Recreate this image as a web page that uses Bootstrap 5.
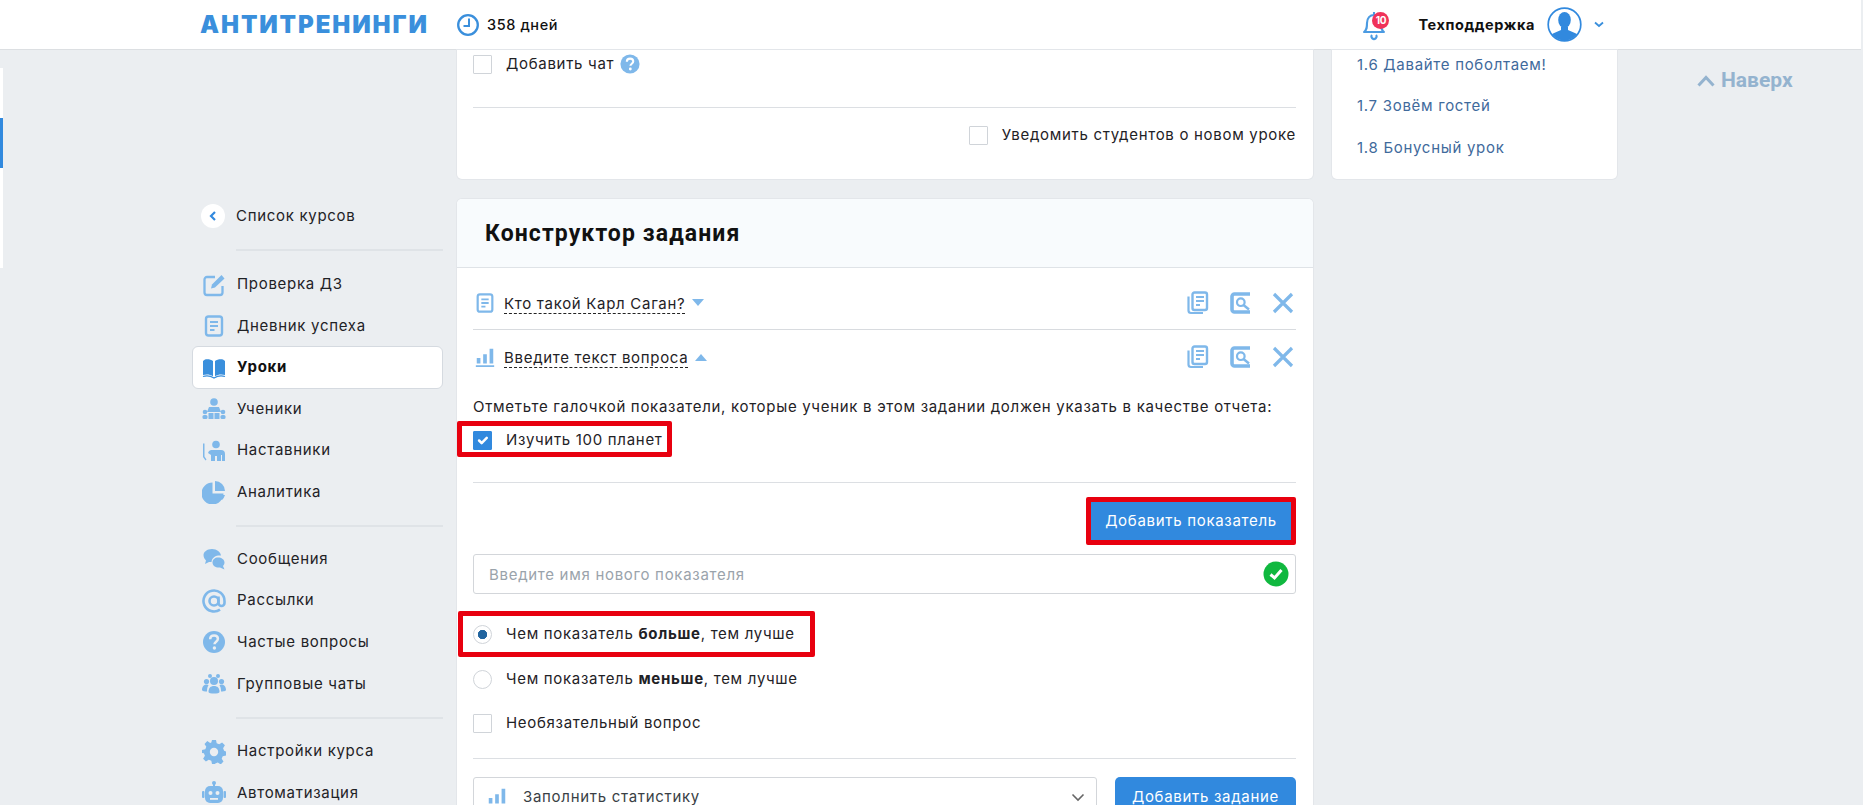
<!DOCTYPE html>
<html lang="ru">
<head>
    <meta charset="UTF-8">
    <meta name="viewport" content="width=device-width, initial-scale=1.0">
    <title>Конструктор задания</title>
    <link href="https://cdn.jsdelivr.net/npm/bootstrap@5.3.0/dist/css/bootstrap.min.css" rel="stylesheet">
    <script src="https://cdn.jsdelivr.net/npm/bootstrap@5.3.0/dist/js/bootstrap.bundle.min.js"></script>
    <style>
        html, body { height: 805px; overflow: hidden; }
        body {
            background-color: #ebeef1;
            font-family: Inter, "Noto Sans", sans-serif;
            font-size: 15px;
            color: #1f2226;
            letter-spacing: .7px;
        }
        /* top bar */
        .top-bar {
            height: 50px;
            margin-right: 2px;
            padding: 0 0 0 200px;
            background: #fff;
            border-bottom: 1px solid #dcdfe2;
            flex-wrap: nowrap;
            justify-content: flex-start;
        }
        .logo-text {
            width: 229px;
            font-size: 24px;
            font-weight: 900;
            line-height: 1;
            letter-spacing: 1.9px;
            color: #3a8fdc;
        }
        .days { margin-left: 27px; font-size: 14.5px; font-weight: 500; color: #111; letter-spacing: .6px; }
        .days svg { margin-right: 7px; }
        .bell { margin-left: auto; width: 28px; height: 32px; position: relative; }
        .bell-count {
            position: absolute; top: 3px; left: 11px;
            width: 17px; height: 17px; border-radius: 50%;
            background: #f0325a; color: #fff;
            font-size: 10px; font-weight: 700; line-height: 17px; text-align: center; letter-spacing: -.4px;
        }
        .support-name { margin-left: 29px; font-size: 14.5px; font-weight: 700; color: #111; letter-spacing: .6px; }
        .avatar { margin-left: 12px; }
        .user-caret { margin: 0 257px 0 12px; }

        /* page columns */
        .page-row { height: 755px; }
        .left-stub {
            width: 3px; height: 200px; margin: 18px 189px 0 0;
            background: #fff; position: relative;
        }
        .left-stub i { display: block; position: absolute; top: 50px; left: 0; width: 3px; height: 50px; background: #3189de; }
        .side-col { width: 251px; flex: none; padding-top: 145px; }
        .main-col { width: 856px; flex: none; margin-left: 14px; }
        .lessons-col { width: 285px; flex: none; margin-left: 19px; }
        .up-col { margin-left: 80px; padding-top: 19px; font-family: Roboto, sans-serif; font-size: 21px; font-weight: 700; line-height: 22px; color: #94b3cf; letter-spacing: 0; }
        .up-col svg { margin-right: 6px; vertical-align: 0; }

        /* sidebar */
        .side-item { height: 41.7px; padding-left: 9px; color: #1f2226; text-decoration: none; border: 1px solid transparent; }
        .side-item svg { width: 24px; height: 24px; margin-right: 11px; flex: none; color: #7fb8ea; }
        .side-item.active-item {
            height: 43px; margin: -1px 0 -1px; background: #fff; border-color: #d5dae0; border-radius: 6px;
            font-weight: 700; color: #111;
        }
        .side-item.active-item svg { color: #3a8fdc; }
        .back-dot { width: 24px; height: 24px; margin: 0 11px 0 -1px; border-radius: 50%; background: #fff; }
        .side-item .back-dot svg { width: 8px; height: 10px; margin: 0; color: #3189de; }
        .side-line { height: 2px; margin: 12px 0 11px 44px; background: #dfe3e7; }
        .side-line.first-line { margin-bottom: 13px; }
        .side-line.last-line { margin-bottom: 12px; }

        /* cards */
        .plain-card { border: 0; border-radius: 5px; background: #fff; box-shadow: 0 0 0 1px #e3e6ea; }
        .top-card { height: 129px; padding: 3px 17px 0 16px; border-top-left-radius: 0; border-top-right-radius: 0; }
        .top-card .thin-line { margin-top: 32px; }
        .top-card .notify-row { margin-top: 16px; }
        .builder-card { margin-top: 20px; height: 640px; padding: 0 17px 0 16px; }
        .builder-head {
            height: 69px; margin: 0 -17px 0 -16px; padding: 3px 0 0 28px;
            background: #f8fbfd; border-bottom: 1px solid #dfe3e7; border-radius: 5px 5px 0 0;
            font-family: Roboto, sans-serif; font-size: 23px; font-weight: 700; color: #111; letter-spacing: 1.1px;
        }
        .thin-line { height: 1px; background: #dcdfe3; }
        .opt-row { height: 22px; }
        .opt-row .form-check-input { margin: 0 14px 0 0; flex: none; }
        .form-check-input { width: 19px; height: 19px; border-color: #d0d4d9; background-color: #fff; }
        .form-check-input[type=checkbox] { border-radius: 1px; }
        .form-check-input:checked { background-color: #3189de; border-color: #3189de; }
        .form-check-input[type=radio]:checked { background-color: #fff; border-color: #d0d4d9; background-image: radial-gradient(circle, #22659f 0 4.4px, transparent 5px); }
        .help-dot { margin-left: 6px; }
        .task-row { height: 54px; border-bottom: 1px solid #d8dbdf; }
        .task-row.first-row { height: 54px; margin-top: 8px; }
        .task-row.last-row { border-bottom: 0; }
        .task-row svg { flex: none; }
        .type-icon { margin-right: 8px; margin-left: 1px; color: #7fb8ea; }
        .task-title { border-bottom: 1px dashed #222; line-height: 19px; margin-top: 2px; }
        .caret-mark { margin-left: 7px; }
        .task-tools { margin-left: auto; margin-right: 1px; gap: 19px; color: #7fb8ea; }
        .report-text { margin-top: 12px; line-height: 21px; }
        .red-mark { border: 5px solid #e8000f; border-radius: 2px; box-sizing: border-box; }
        .mark-check { width: 215px; height: 36px; margin: 4px 0 0 -16px; padding: 2px 0 0 11px; }
        .report-line { margin-top: 25px; }
        .mark-radio { width: 357px; height: 46px; margin: 17px 0 0 -15px; padding-left: 10px; }
        .mark-btn { width: 210px; height: 48px; margin: 14px 0 0 auto; }
        .blue-btn {
            width: 100%; height: 100%; padding: 1px 0 0; border: 0; border-radius: 0; background: #3189de; color: #fff;
            font-size: 15px; letter-spacing: .7px;
        }
        .name-box { height: 40px; margin: 9px 0 0 0; position: relative; }
        .name-box .form-control {
            height: 40px; border-color: #d3d6da; border-radius: 3px; font-size: 15px; padding-left: 15px; letter-spacing: .7px;
        }
        .name-box .form-control::placeholder { color: #9aa3ab; }
        .name-box svg { position: absolute; right: 7px; top: 7px; }
        .radio-two { margin-top: 11px; }
        .optional-row { margin-top: 22px; }
        .bottom-line { margin-top: 24px; }
        .bottom-row { margin-top: 18px; }
        .stat-select {
            width: 624px; height: 40px; padding: 0 11px 0 12px;
            border: 1px solid #d3d6da; border-radius: 3px; color: #3a3f45;
        }
        .stat-select .type-icon { margin: 0 15px 0 0; }
        .add-btn { width: 181px; height: 40px; margin-left: auto; padding: 0; border: 0; border-radius: 5px; background: #3189de; color: #fff; font-size: 15px; letter-spacing: .7px; }

        /* lessons list */
        .lessons-card { height: 129px; padding: 5px 0 0 25px; border-top-left-radius: 0; border-top-right-radius: 0; }
        .lesson-link { display: block; height: 42.5px; line-height: 19px; color: #3f6a9c; text-decoration: none; }
    </style>
</head>
<body>
    <svg width="0" height="0" class="position-absolute">
        <defs>
            <symbol id="i-doc" viewBox="0 0 24 24">
                <rect x="4" y="2.500" width="16" height="19" rx="2.500" fill="none" stroke="currentColor" stroke-width="2.400"/>
                <path d="M8 8h8M8 12h8M8 16h4.500" stroke="currentColor" stroke-width="2" fill="none"/>
            </symbol>
            <symbol id="i-bars" viewBox="0 0 24 24">
                <path d="M3 13h4v6H3zM10 9h4v10h-4zM17 3h4v16h-4zM2 21h20v2H2z" fill="currentColor"/>
            </symbol>
            <symbol id="i-copy" viewBox="0 0 24 24">
                <path d="M3.500 5.500v14a2.500 2.500 0 0 0 2.500 2.500h12" fill="none" stroke="currentColor" stroke-width="2.200"/>
                <rect x="7.500" y="1.500" width="14.500" height="17.500" rx="2" fill="none" stroke="currentColor" stroke-width="2.400"/>
                <path d="M11 6h8M11 10h8M11 14h4" stroke="currentColor" stroke-width="2" fill="none"/>
            </symbol>
            <symbol id="i-lookup" viewBox="0 0 24 24">
                <path d="M22 3H6.500A2.500 2.500 0 0 0 4 5.500v13A2.500 2.500 0 0 0 6.500 21H22" fill="none" stroke="currentColor" stroke-width="3.600"/>
                <circle cx="12.800" cy="11.200" r="3.800" fill="none" stroke="currentColor" stroke-width="2.200"/>
                <path d="M15.500 14l5.500 4.500" stroke="currentColor" stroke-width="2.400"/>
            </symbol>
            <symbol id="i-cross" viewBox="0 0 24 24">
                <path d="M3 3l18 18M21 3L3 21" stroke="currentColor" stroke-width="3.200" fill="none"/>
            </symbol>
        </defs>
    </svg>

    <nav class="navbar top-bar">
        <span class="logo-text">АНТИТРЕНИНГИ</span>
        <span class="days d-flex align-items-center">
            <svg width="24" height="24" viewBox="0 0 24 24"><circle cx="12" cy="12" r="9.800" fill="none" stroke="#3a8fdc" stroke-width="2.300"/><path d="M13 5.500v7.500H7.500" fill="none" stroke="#3a8fdc" stroke-width="2"/></svg>
            358 дней
        </span>
        <span class="bell">
            <svg width="24" height="32" viewBox="0 0 24 32"><path d="M3 23c3-2 3-5 3-9 0-5 3-8 7-8s7 3 7 8c0 4 0 7 3 9zM11 26a2.500 2.500 0 1 0 4 0M13 3v3" fill="none" stroke="#4b9be2" stroke-width="2.100" stroke-linejoin="round"/></svg>
            <span class="bell-count">10</span>
        </span>
        <span class="support-name">Техподдержка</span>
        <svg class="avatar" width="35" height="35" viewBox="0 0 35 35"><defs><clipPath id="av"><circle cx="17.500" cy="17.500" r="16"/></clipPath></defs><circle cx="17.500" cy="17.500" r="16.300" fill="#fff" stroke="#3189de" stroke-width="1.700"/><g clip-path="url(#av)" fill="#3189de"><ellipse cx="17.500" cy="13" rx="6.300" ry="8"/><path d="M14 20h7v3l8 3.500c2 1 3 3 3 8.500H3c0-5.500 1-7.500 3-8.500l8-3.500z"/></g></svg>
        <svg class="user-caret" width="10" height="7" viewBox="0 0 10 7"><path d="M1 1.500l4 3.500 4-3.500" fill="none" stroke="#3a8fdc" stroke-width="1.800"/></svg>
    </nav>

    <div class="page-row d-flex">
        <div class="left-stub"><i></i></div>

        <aside class="side-col">
            <a class="side-item d-flex align-items-center" href="#">
                <span class="back-dot d-flex align-items-center justify-content-center"><svg viewBox="0 0 8 10"><path d="M6 1L2 5l4 4" fill="none" stroke="currentColor" stroke-width="2.200"/></svg></span>
                Список курсов
            </a>
            <div class="side-line first-line"></div>
            <a class="side-item d-flex align-items-center" href="#">
                <svg viewBox="0 0 24 24"><path d="M13 4H5a2.500 2.500 0 0 0-2.500 2.500v13A2.500 2.500 0 0 0 5 22h13a2.500 2.500 0 0 0 2.500-2.500V13" fill="none" stroke="currentColor" stroke-width="2.300"/><path d="M9 15.500l1-4L19.500 2l3 3.500L13 14.500z" fill="currentColor"/></svg>
                Проверка ДЗ
            </a>
            <a class="side-item d-flex align-items-center" href="#">
                <svg><use href="#i-doc"/></svg>
                Дневник успеха
            </a>
            <a class="side-item active-item d-flex align-items-center" href="#">
                <svg viewBox="0 0 24 24"><path d="M11 5C9 3.500 6 3 3 3.500L1 5v14c3-.800 7-.800 10 1.200zM13 5c2-1.500 5-2 8-1.500L23 5v14c-3-.800-7-.800-10 1.200z" fill="currentColor"/><path d="M1 20.500c3-1 7-1 11 1.500 4-2.500 8-2.500 11-1.500" fill="none" stroke="currentColor" stroke-width="1.300"/></svg>
                Уроки
            </a>
            <a class="side-item d-flex align-items-center" href="#">
                <svg viewBox="0 0 24 24" fill="currentColor"><circle cx="12" cy="5" r="3.800"/><path d="M7 10h10l2 5H5z"/><circle cx="3" cy="15" r="2.300"/><circle cx="21" cy="15" r="2.300"/><rect x="0.500" y="18" width="5" height="4" rx="1.500"/><rect x="18.500" y="18" width="5" height="4" rx="1.500"/><path d="M6.500 16h5v6h-5zM12.500 16h5v6h-5z"/></svg>
                Ученики
            </a>
            <a class="side-item d-flex align-items-center" href="#">
                <svg viewBox="0 0 24 24" fill="currentColor"><circle cx="14" cy="5.500" r="3.800"/><path d="M9 11h10a4 4 0 0 1 4 4v7h-3v-6h-1v6h-4v-5h-2v5H9v-6l-3-2 1-2z"/><path d="M1 4.500V18l2.500 3.500 1-1L2.500 17.500V4.500z"/></svg>
                Наставники
            </a>
            <a class="side-item d-flex align-items-center" href="#">
                <svg viewBox="0 0 24 24" fill="currentColor"><path d="M10.500 2.500v11h11a11 11 0 1 1-11-11z"/><path d="M13 1a10 10 0 0 1 10 10H13z"/><path d="M14 15h9a11 11 0 0 1-3 5z"/></svg>
                Аналитика
            </a>
            <div class="side-line"></div>
            <a class="side-item d-flex align-items-center" href="#">
                <svg viewBox="0 0 24 24" fill="currentColor"><path d="M10 2c5 0 8.500 3 9 6.500-4-.500-9 1-9.500 6.500L7 15l-4 2 1-3.500C2.500 12 1.500 10 1.500 8 1.500 5 5 2 10 2z"/><path d="M16 10.500c3.500 0 6.500 2 6.500 5 0 1.500-.700 2.700-1.500 3.500l1.500 3.500-4.500-2c-4 .500-7.500-1.500-7.500-5 0-3 2.500-5 5.500-5z"/></svg>
                Сообщения
            </a>
            <a class="side-item d-flex align-items-center" href="#">
                <svg viewBox="0 0 24 24" fill="none" stroke="currentColor" stroke-width="2.600"><circle cx="12" cy="12" r="4.500"/><path d="M16.500 7.500v6.500a3 3 0 0 0 6 0v-2a10.500 10.500 0 1 0-4.500 8.600"/></svg>
                Рассылки
            </a>
            <a class="side-item d-flex align-items-center" href="#">
                <svg viewBox="0 0 24 24"><circle cx="12" cy="12" r="11" fill="currentColor"/><path d="M8.200 9.200c0-2.300 1.700-3.700 3.900-3.700s3.800 1.300 3.800 3.300c0 2.800-3.400 2.900-3.400 5.400" fill="none" stroke="#ebeef1" stroke-width="2.500"/><circle cx="12.400" cy="18" r="1.700" fill="#ebeef1"/></svg>
                Частые вопросы
            </a>
            <a class="side-item d-flex align-items-center" href="#">
                <svg viewBox="0 0 24 24" fill="currentColor"><circle cx="12" cy="9" r="4"/><path d="M6.500 20c0-4 2-6 5.500-6s5.500 2 5.500 6c0 2-11 2-11 0z"/><circle cx="4.500" cy="9.500" r="2.600"/><circle cx="19.500" cy="9.500" r="2.600"/><circle cx="8" cy="4" r="2"/><circle cx="16" cy="4" r="2"/><path d="M0 18c0-3 1.500-5.500 4.500-5.500 1 0 1.500.3 2 .700-1 1.500-1.500 3.300-1.500 6.300-2 0-5-.500-5-1.500zM24 18c0-3-1.500-5.500-4.500-5.500-1 0-1.500.3-2 .700 1 1.500 1.500 3.300 1.500 6.300 2 0 5-.500 5-1.500z"/></svg>
                Групповые чаты
            </a>
            <div class="side-line last-line"></div>
            <a class="side-item d-flex align-items-center" href="#">
                <svg viewBox="0 0 24 24"><path fill="currentColor" d="M10 0h4l.700 3.300 2.500 1 2.900-1.800 2.800 2.800-1.800 2.900 1 2.500L24 11.500v4l-3.300.700-1 2.500 1.800 2.900-2.800 2.800-2.900-1.800-2.500 1L13 24h-3l-.700-3.300-2.500-1-2.900 1.800-2.800-2.800 1.800-2.900-1-2.500L0 13v-3l3.300-.700 1-2.500L2.500 3.900 5.300 1.100l2.900 1.800 1.100-.500z"/><circle cx="12" cy="12" r="4.200" fill="#ebeef1"/></svg>
                Настройки курса
            </a>
            <a class="side-item d-flex align-items-center" href="#">
                <svg viewBox="0 0 24 24"><path fill="currentColor" d="M11 1h2v4h-2z"/><circle cx="12" cy="2" r="2" fill="currentColor"/><rect x="3" y="5" width="18" height="17" rx="5" fill="currentColor"/><rect x="0" y="10" width="2.500" height="7" rx="1" fill="currentColor"/><rect x="21.500" y="10" width="2.500" height="7" rx="1" fill="currentColor"/><circle cx="8.500" cy="12" r="2" fill="#ebeef1"/><circle cx="15.500" cy="12" r="2" fill="#ebeef1"/><rect x="8" y="17" width="8" height="1.800" fill="#ebeef1"/></svg>
                Автоматизация
            </a>
        </aside>

        <main class="main-col">
            <section class="card plain-card top-card">
                <div class="opt-row d-flex align-items-center">
                    <input class="form-check-input" type="checkbox">
                    <span>Добавить чат</span>
                    <svg class="help-dot" width="20" height="20" viewBox="0 0 24 24"><circle cx="12" cy="12" r="11.500" fill="#7fb8ea"/><path d="M8.200 9.200c0-2.300 1.700-3.700 3.900-3.700s3.800 1.300 3.800 3.300c0 2.800-3.400 2.900-3.400 5.400" fill="none" stroke="#fff" stroke-width="2.500"/><circle cx="12.400" cy="18" r="1.700" fill="#fff"/></svg>
                </div>
                <div class="thin-line"></div>
                <div class="opt-row notify-row d-flex align-items-center justify-content-end">
                    <input class="form-check-input" type="checkbox">
                    <span>Уведомить студентов о новом уроке</span>
                </div>
            </section>

            <section class="card plain-card builder-card">
                <div class="builder-head d-flex align-items-center">Конструктор задания</div>

                <div class="task-row first-row d-flex align-items-center">
                    <svg class="type-icon" width="22" height="22"><use href="#i-doc"/></svg>
                    <span class="task-title">Кто такой Карл Саган?</span>
                    <svg class="caret-mark" width="12" height="7" viewBox="0 0 12 7"><path d="M0 0h12L6 7z" fill="#7fb8ea"/></svg>
                    <div class="task-tools d-flex">
                        <svg width="24" height="24"><use href="#i-copy"/></svg>
                        <svg width="24" height="24"><use href="#i-lookup"/></svg>
                        <svg width="24" height="24"><use href="#i-cross"/></svg>
                    </div>
                </div>
                <div class="task-row last-row d-flex align-items-center">
                    <svg class="type-icon" width="22" height="22"><use href="#i-bars"/></svg>
                    <span class="task-title">Введите текст вопроса</span>
                    <svg class="caret-mark" width="12" height="7" viewBox="0 0 12 7"><path d="M0 7h12L6 0z" fill="#7fb8ea"/></svg>
                    <div class="task-tools d-flex">
                        <svg width="24" height="24"><use href="#i-copy"/></svg>
                        <svg width="24" height="24"><use href="#i-lookup"/></svg>
                        <svg width="24" height="24"><use href="#i-cross"/></svg>
                    </div>
                </div>

                <div class="report-text">Отметьте галочкой показатели, которые ученик в этом задании должен указать в качестве отчета:</div>
                <div class="red-mark mark-check d-flex align-items-center">
                    <div class="opt-row d-flex align-items-center">
                        <input class="form-check-input" type="checkbox" checked>
                        <span>Изучить 100 планет</span>
                    </div>
                </div>
                <div class="thin-line report-line"></div>

                <div class="red-mark mark-btn">
                    <button class="btn blue-btn" type="button">Добавить показатель</button>
                </div>
                <div class="name-box">
                    <input class="form-control" type="text" placeholder="Введите имя нового показателя">
                    <svg width="26" height="26" viewBox="0 0 26 26"><circle cx="13" cy="13" r="12.500" fill="#10b83f"/><path d="M7.500 13.500l4 3.500 7-8" fill="none" stroke="#fff" stroke-width="3"/></svg>
                </div>

                <div class="red-mark mark-radio d-flex align-items-center">
                    <div class="opt-row d-flex align-items-center">
                        <input class="form-check-input" type="radio" name="better" checked>
                        <span>Чем показатель <b>больше</b>, тем лучше</span>
                    </div>
                </div>
                <div class="opt-row d-flex align-items-center radio-two">
                    <input class="form-check-input" type="radio" name="better">
                    <span>Чем показатель <b>меньше</b>, тем лучше</span>
                </div>
                <div class="opt-row d-flex align-items-center optional-row">
                    <input class="form-check-input" type="checkbox">
                    <span>Необязательный вопрос</span>
                </div>
                <div class="thin-line bottom-line"></div>

                <div class="d-flex bottom-row">
                    <div class="stat-select d-flex align-items-center">
                        <svg class="type-icon" width="22" height="22"><use href="#i-bars"/></svg>
                        <span>Заполнить статистику</span>
                        <svg class="ms-auto" width="14" height="9" viewBox="0 0 14 9"><path d="M1.500 1.500L7 7l5.500-5.500" fill="none" stroke="#666" stroke-width="1.600"/></svg>
                    </div>
                    <button class="add-btn" type="button">Добавить задание</button>
                </div>
            </section>
        </main>

        <aside class="lessons-col">
            <div class="card plain-card lessons-card">
                <a class="lesson-link" href="#">1.6 Давайте поболтаем!</a>
                <a class="lesson-link" href="#">1.7 Зовём гостей</a>
                <a class="lesson-link" href="#">1.8 Бонусный урок</a>
            </div>
        </aside>

        <div class="up-col">
            <svg width="18" height="12" viewBox="0 0 18 12"><path d="M1.500 10.500L9 2.500l7.500 8" fill="none" stroke="#94b3cf" stroke-width="3"/></svg>Наверх
        </div>
    </div>
</body>
</html>
